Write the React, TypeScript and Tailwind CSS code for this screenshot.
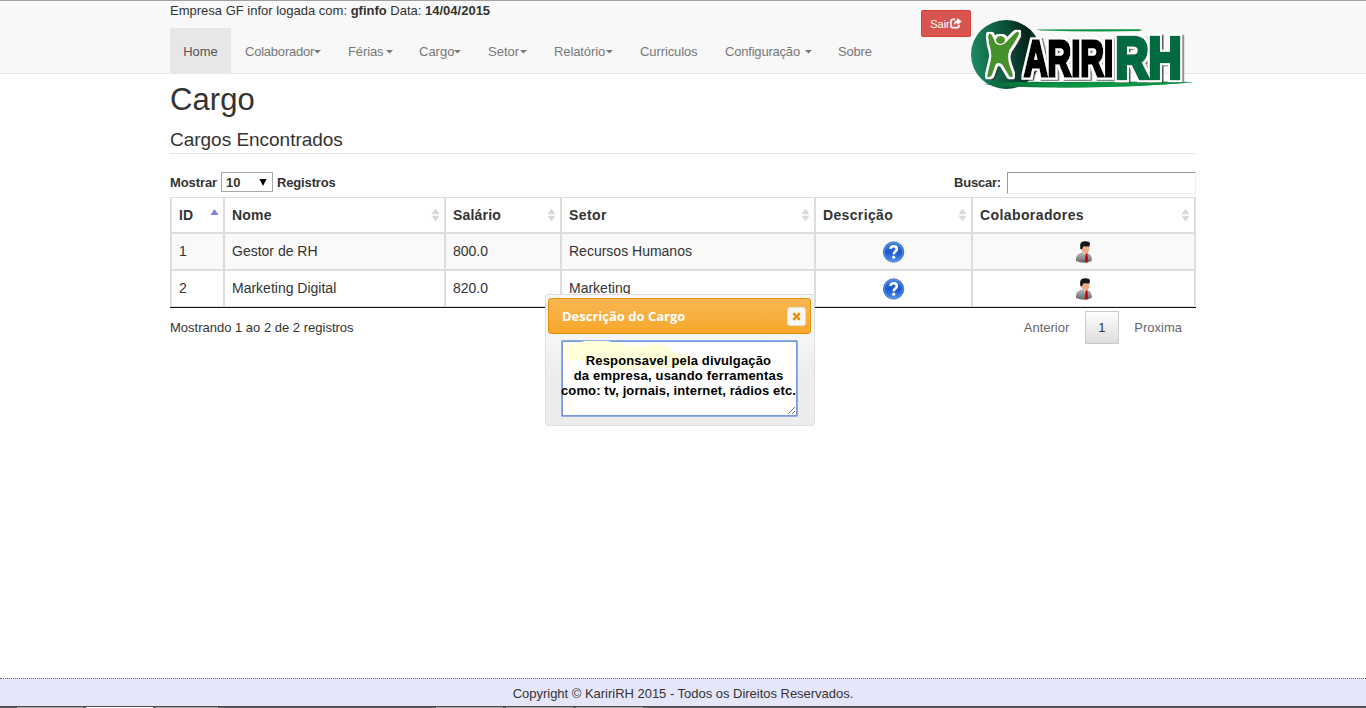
import React from 'react';

const navItems = [
  { label: 'Colaborador', width: 'w-[103px]', text: 'tracking-[-0.22px]', caret: true },
  { label: 'Férias', width: 'w-[71px]', text: 'tracking-[-0.1px]', caret: true, gap: 'ml-[2px]' },
  { label: 'Cargo', width: 'w-[69px]', text: '', caret: true },
  { label: 'Setor', width: 'w-[66px]', text: '', caret: true, gap: 'ml-px' },
  { label: 'Relatório', width: 'w-[86px]', text: 'tracking-[-0.1px]', caret: true, gap: 'ml-px' },
  { label: 'Curriculos', width: 'w-[85px]', text: 'tracking-[-0.1px]' },
  { label: 'Configuração', width: 'w-[113px]', text: 'tracking-[-0.2px]', caret: true, gap: 'ml-[5px]' },
  { label: 'Sobre', width: 'w-[60px]', text: 'tracking-[-0.2px]' },
];

const columns = [
  { label: 'ID', width: 'w-[53px]', text: 'tracking-[0.2px]' },
  { label: 'Nome', width: 'w-[221px]', text: 'tracking-[0.2px]' },
  { label: 'Salário', width: 'w-[116px]', text: 'tracking-[0.2px]' },
  { label: 'Setor', width: 'w-[254px]', text: 'tracking-[0.4px]' },
  { label: 'Descrição', width: 'w-[157px]', text: 'tracking-[0.35px]' },
  { label: 'Colaboradores', width: 'w-[223px]', text: 'tracking-[0.4px]' },
];

const rows = [
  { id: '1', name: 'Gestor de RH', salary: '800.0', sector: 'Recursos Humanos', cell: 'h-[37px] border-b-2 bg-[#f9f9f9]' },
  { id: '2', name: 'Marketing Digital', salary: '820.0', sector: 'Marketing', cell: 'h-[36px] border-b bg-white' },
];

function Logo() {
  return (
    <svg className="absolute left-[800px] top-[18px]" width="226" height="74" viewBox="970 18 226 74">
      <defs>
        <linearGradient id="ball" x1="0" y1=".55" x2="1" y2=".45">
          <stop offset="0" stopColor="#1d8a62" />
          <stop offset=".45" stopColor="#0d5a40" />
          <stop offset=".85" stopColor="#02201a" />
          <stop offset="1" stopColor="#07603c" />
        </linearGradient>
        <linearGradient id="swoosh" x1="0" x2="1">
          <stop offset="0" stopColor="#067038" />
          <stop offset=".6" stopColor="#0b9444" />
          <stop offset="1" stopColor="#12a04c" />
        </linearGradient>
        <filter id="outline" filterUnits="userSpaceOnUse" x="970" y="18" width="226" height="74">
          <feMorphology in="SourceAlpha" operator="dilate" radius="1.5" result="wide" />
          <feFlood floodColor="#fff" />
          <feComposite in2="wide" operator="in" result="edge" />
          <feMerge result="sticker">
            <feMergeNode in="edge" />
            <feMergeNode in="SourceGraphic" />
          </feMerge>
          <feDropShadow in="sticker" dx="1.5" dy="1" stdDeviation=".5" floodColor="#333" floodOpacity=".8" />
        </filter>
      </defs>
      <ellipse cx="1006" cy="54.5" rx="35" ry="34.5" fill="url(#ball)" />
      <path d="M1036 29.5 Q1090 29 1138 29.3 Q1145 30 1139 31 Q1090 32 1041 30.5Z" fill="#0b9444" />
      <path d="M984 84 Q1010 81 1055 82 L1160 81.5 L1194 82 Q1140 87.5 1060 87.5 Q1012 88 984 84Z" fill="url(#swoosh)" />
      <g filter="url(#outline)">
        <path
          d="M988 36 Q989 32 992 35 L995.5 43 Q1000 47 1005 43 L1014 34 Q1018 30 1019 33 Q1019 36 1009.5 50 Q1007 57 1009.500 65 L1013 75 Q1012 79 1009 76 L1002.500 65 Q998 61 995.500 65 L992 75 Q989 79 987 76 L991 59 Q992 53 989 44Z"
          fill="#44922b"
        />
        <ellipse cx="1000.5" cy="40" rx="4.6" ry="4" fill="#44922b" />
      </g>
      <g filter="url(#outline)" fontFamily="Liberation Sans, sans-serif" fontWeight="700" strokeLinejoin="miter">
        <text x="1024" y="76" fontSize="50" textLength="89" lengthAdjust="spacingAndGlyphs" fill="#000" stroke="#000" strokeWidth="3.6">ARIRI</text>
        <text x="1115.500" y="77.500" fontSize="57" textLength="66" lengthAdjust="spacingAndGlyphs" fill="#006b41" stroke="#006b41" strokeWidth="4.6">RH</text>
      </g>
      <path d="M1020 84 L1194 82.3 Q1140 87 1060 87.5Z" fill="#0b9444" />
    </svg>
  );
}

function SortIcon({ active }: { active?: boolean }) {
  return active ? (
    <svg width="9" height="14" viewBox="0 0 9 14"><path d="M4.5 1 8.5 7H.5Z" fill="#8282e0" /></svg>
  ) : (
    <svg width="9" height="14" viewBox="0 0 9 14"><path d="M4.5 .5 8.5 6.3H.5ZM.5 7.7h8L4.5 13.5Z" fill="#d9d9d9" /></svg>
  );
}

function HelpIcon() {
  return (
    <svg width="22" height="22" viewBox="0 0 22 22">
      <defs>
        <linearGradient id="help" x1="0" y1="0" x2="0" y2="1">
          <stop offset="0" stopColor="#4486e6" />
          <stop offset=".5" stopColor="#1d56cc" />
          <stop offset="1" stopColor="#4c90f2" />
        </linearGradient>
      </defs>
      <circle cx="10.600" cy="11" r="10.2" fill="url(#help)" stroke="#3a69bd" strokeWidth=".8" />
      <circle cx="10.600" cy="11" r="9.3" fill="none" stroke="#6d9de9" strokeWidth=".7" />
      <path d="M7.500 7.800Q7.800 5.300 10.800 5.300T13.800 8.100Q13.800 9.700 12.200 10.600Q10.800 11.400 10.800 13.200" fill="none" stroke="#fff" strokeWidth="2.600" />
      <circle cx="10.700" cy="16.200" r="1.6" fill="#fff" />
    </svg>
  );
}

function PersonIcon() {
  return (
    <svg width="18" height="22" viewBox="0 0 18 22">
      <defs>
        <linearGradient id="suit" x1="0" y1="0" x2="0" y2="1">
          <stop offset="0" stopColor="#bdbdbd" />
          <stop offset="1" stopColor="#666" />
        </linearGradient>
      </defs>
      <path d="M1 20Q.5 14.5 4 12.8L8 11l5 1.5Q17 13.5 16.8 20Q9 23.5 1 20Z" fill="url(#suit)" />
      <path d="M8.2 11.5h3.6l-.2 5Z" fill="#eee" />
      <path d="m10.5 12 1.8.2.9 8-1.4 1.5-1.8-.8Z" fill="#c7000e" />
      <path d="M6.2 5h8v3.5q-.3 4-3.3 4-3.7-.6-4.7-4Z" fill="#efad88" />
      <path d="M5.2 7.800V3.500Q6 .3 10 .3Q14.500.2 15 2.500l-.5 3-6-.3-1.700 3.300Z" fill="#171717" />
    </svg>
  );
}

function DescriptionDialog() {
  return (
    <div className="absolute left-[545px] top-[294px] flex h-[132px] w-[270px] flex-col rounded-[3px] border border-[#ddd] bg-linear-to-b from-[#f7f7f7] from-30% to-[#ededed] to-60% px-[2px] pt-[3px]">
      <div className="flex h-[36px] w-[263px] shrink-0 items-center justify-between rounded-[3px] border border-[#e78f08] bg-linear-to-b from-[#f9b750] to-[#f6a828] pl-[13px] pr-[4px]">
        <span className="pt-[2px] font-['Open_Sans',sans-serif] text-[13px] font-bold text-white">Descrição do Cargo</span>
        <button className="flex size-[19px] items-center justify-center rounded-[3px] border border-[#ddd] bg-[#f7f7f7]">
          <svg width="9" height="9" viewBox="0 0 9 9"><path d="m1.2 1.2 6.6 6.6M7.8 1.2 1.2 7.8" stroke="#ef8c08" strokeWidth="2.5" /></svg>
        </button>
      </div>
      <div className="relative ml-[13px] mt-[6px] h-[77px] w-[237px] shrink-0 rounded-[1px] border border-[#8fb0e8] bg-white pt-[12px] shadow-[inset_0_0_0_1px_#7399dc]">
        <svg className="absolute left-[1px] top-0" width="140" height="30" viewBox="0 0 140 30">
          <path d="M0 5Q13 2 22 0H45Q62 5 78 5Q98 1 106 7Q110 13 120 14Q134 16 132 26L75 28Q44 31 33 20L2 19Z" fill="#ffffd9" />
        </svg>
        <div className="relative -left-[1px] -mx-[2px] flex flex-col items-center whitespace-nowrap text-[13px] font-bold leading-[15px] text-black">
          <span className="tracking-[0.15px]">Responsavel pela divulgação</span>
          <span className="tracking-[0.2px]">da empresa, usando ferramentas</span>
          <span className="tracking-[0.12px]">como: tv, jornais, internet, rádios etc.</span>
        </div>
        <svg className="absolute bottom-[1px] right-[1px]" width="9" height="9" viewBox="0 0 9 9"><path d="M1 8 8 1M5 8l3-3" stroke="#777" strokeWidth="1" /></svg>
      </div>
    </div>
  );
}

export default function App() {
  return (
    <div className="relative flex h-[708px] w-[1366px] flex-col overflow-hidden bg-white font-['Liberation_Sans',Arial,sans-serif] text-[13px] text-[#333]">
      <header className="h-[74px] shrink-0 border-b border-t border-b-[#e7e7e7] border-t-[#a0a0a0] bg-[#f8f8f8] pl-[170px]">
        <p className="h-[27px] whitespace-nowrap leading-[19px]">
          Empresa GF infor logada com: <b>gfinfo</b> Data: <b>14/04/2015</b>
        </p>
        <nav className="flex h-[45px] items-center text-[#777]">
          <a className="flex h-full w-[61px] items-center justify-center bg-[#e7e7e7] pt-[3px] text-[#555]">Home</a>
          <div className="flex pl-[14px] pt-[3px]">
            {navItems.map((n) => (
              <a key={n.label} className={`flex items-center whitespace-nowrap ${n.width}`}>
                <span className={n.text}>{n.label}</span>
                {n.caret && (
                  <svg className={n.gap} width="7" height="4" viewBox="0 0 7 4"><path d="M0 0h7L3.500 3.500Z" fill="#777" /></svg>
                )}
              </a>
            ))}
          </div>
        </nav>
      </header>

      <main className="ml-[170px] w-[1026px] flex-1">
        <h1 className="h-[54px] pt-[8px] text-[31px] leading-[36px] tracking-[0.1px]">Cargo</h1>
        <h2 className="h-[26px] border-b border-[#e5e5e5] text-[19px] leading-[24px] tracking-[-0.02px]">Cargos Encontrados</h2>
        <div className="flex h-[43px] items-start justify-between pt-[18px] font-bold">
          <label className="flex h-[20px] items-center">
            <span className="pt-px tracking-[-0.1px]">Mostrar</span>
            <span className="mx-[4px] flex h-[20px] w-[52px] items-center justify-between border border-[#a9a9a9] pl-[4px] pr-[5px]">
              <span className="pt-px">10</span>
              <svg width="8" height="7" viewBox="0 0 8 7"><path d="M.5 0h7L4 7Z" fill="#000" /></svg>
            </span>
            <span className="pt-px tracking-[-0.15px]">Registros</span>
          </label>
          <label className="flex h-[22px] items-center">
            <span className="tracking-[-0.2px]">Buscar:</span>
            <input className="ml-[6px] h-[22px] w-[189px] border border-b-[#eee] border-l-[#999] border-r-[#eee] border-t-[#999] bg-white" />
          </label>
        </div>

        <table className="w-[1026px] table-fixed border-separate border-spacing-0 border-l-2 border-t border-[#ddd] text-[14px] leading-[20px] shadow-[0_1px_0_#111]">
          <thead>
            <tr>
              {columns.map((c, i) => (
                <th key={c.label} className={`h-[36px] border-b-2 border-r-2 border-[#ddd] p-0 text-left ${c.width}`}>
                  <div className="flex items-center justify-between pl-[7px] pr-[4px]">
                    <span className={c.text}>{c.label}</span>
                    <SortIcon active={i === 0} />
                  </div>
                </th>
              ))}
            </tr>
          </thead>
          <tbody>
            {rows.map((r) => (
              <tr key={r.id}>
                {[r.id, r.name, r.salary, r.sector].map((v) => (
                  <td key={v} className={`border-r-2 border-[#ddd] p-0 pb-[2px] pl-[7px] ${r.cell}`}>{v}</td>
                ))}
                <td className={`border-r-2 border-[#ddd] p-0 ${r.cell}`}><div className="flex justify-center"><HelpIcon /></div></td>
                <td className={`border-r-2 border-[#ddd] p-0 ${r.cell}`}><div className="flex justify-center"><PersonIcon /></div></td>
              </tr>
            ))}
          </tbody>
        </table>

        <div className="mt-[4px] flex h-[33px] items-center justify-between">
          <span>Mostrando 1 ao 2 de 2 registros</span>
          <div className="flex items-center text-[#666]">
            <span>Anterior</span>
            <span className="ml-[16px] mr-[15px] flex h-[33px] w-[34px] items-center justify-center border border-[#cacaca] bg-linear-to-b from-white to-[#dcdcdc] pr-px text-[#333]">1</span>
            <span className="mr-[14px]">Proxima</span>
          </div>
        </div>
      </main>

      <footer className="flex h-[28px] shrink-0 items-center justify-center border-t border-dotted border-[#666] bg-[#e6e6fa] pt-[2px]">
        <span className="tracking-[-0.02px]">Copyright © KaririRH 2015 - Todos os Direitos Reservados.</span>
      </footer>
      <div className="flex h-[2px] shrink-0 border-t border-[#4c484c] bg-[#666064]">
        <span className="ml-[17px] mr-[3px] w-[66px] bg-[#aaa]" />
        <span className="mr-[3px] w-[67px] bg-white" />
        <span className="w-[62px] bg-[#aaa]" />
        <span className="ml-[218px] w-[67px] bg-[#aaa]" />
        <span className="ml-[3px] w-[67px] bg-[#aaa]" />
        <span className="ml-[3px] w-[67px] bg-[#aaa]" />
      </div>

      <div className="absolute left-[170px] top-0">
        <button className="absolute left-[751px] top-[10px] flex h-[27px] w-[50px] items-center justify-center rounded-[2px] border border-[#d43f3a] bg-[#d9534f] text-[11px] text-white">
          <span className="pt-px">Sair</span>
          <svg width="12" height="11" viewBox="0 0 12 11"><path d="M5.3 1.4H3Q1 1.4 1 3.3v4.4Q1 9.6 3 9.6h4q2 0 2-1.9V6.8" fill="none" stroke="#fff" strokeWidth="1.7" /><path d="M7.3 0 11.7 3.6 7.3 7V4.9Q5.3 5 4 7 4 2.6 7.3 2.3Z" fill="#fff" /></svg>
        </button>
        <Logo />
      </div>
      <DescriptionDialog />
    </div>
  );
}
